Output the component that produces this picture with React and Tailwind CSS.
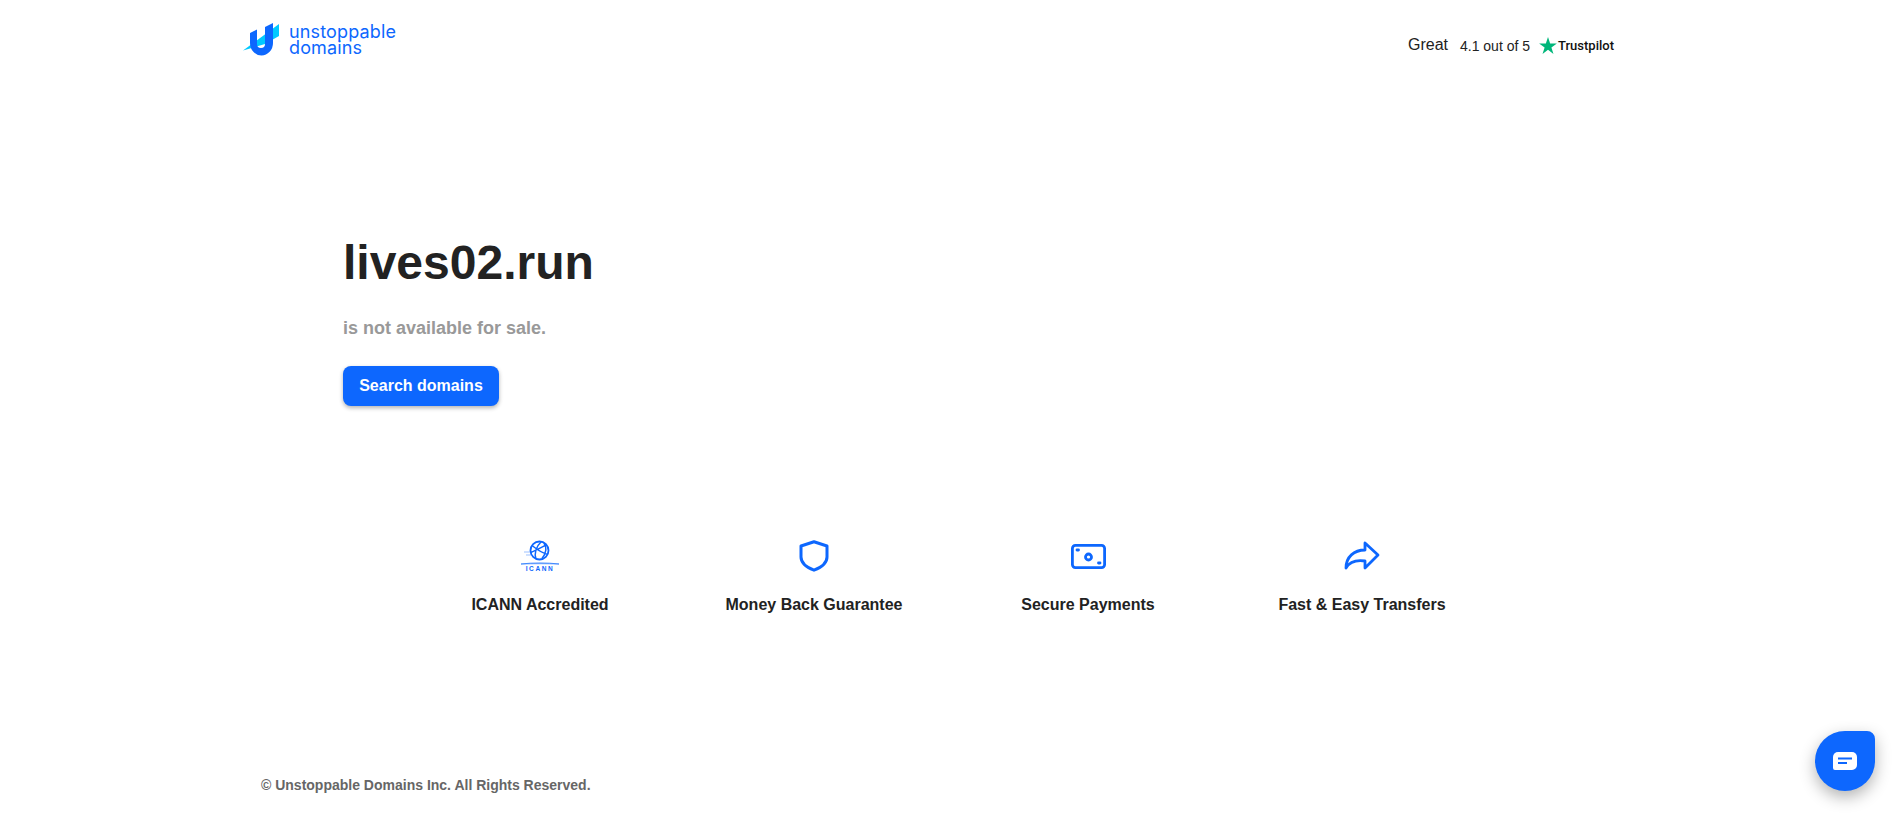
import React from "react";

const BLUE = "#0d67fe";

function Logo() {
  return (
    <div className="flex flex-row items-center gap-[10px]">
      <svg width="36" height="33" viewBox="0 0 36 33">
        <path d="M0 27.5 L36 1 V13 L22 21 Z" fill="#00c9ff" />
        <path d="M7 10 L14 6.5 V21 a4 4 0 0 0 8 0 V4 L30 0 V20 a11.5 12.5 0 0 1 -23 0 Z" fill={BLUE} />
      </svg>
      <div className="text-[18px] leading-[15.5px] tracking-[0.15px] text-[#0d67fe] font-['Inter',sans-serif] font-normal">
        unstoppable
        <br />
        domains
      </div>
    </div>
  );
}

function Trustpilot() {
  return (
    <div className="flex flex-row items-center text-[#222]">
      <span className="text-[16px] mr-[12px] mb-[2px]">Great</span>
      <span className="text-[14px] mr-[9px]">4.1 out of 5</span>
      <svg width="18" height="17" viewBox="0 0 24 23" className="mb-[2px]">
        <path d="M12 0 L14.9 8.7 H24 L16.6 14.1 L19.4 22.9 L12 17.4 L4.6 22.9 L7.4 14.1 L0 8.7 H9.1 Z" fill="#00b67a" />
      </svg>
      <span className="ml-[1px] text-[13px] font-medium text-[#111] font-['Roboto',sans-serif]">Trustpilot</span>
    </div>
  );
}

function Feature({ label, children }) {
  return (
    <div className="w-[274px] flex flex-col items-center">
      <div className="h-[40px] flex items-center justify-center">{children}</div>
      <div className="mt-[17px] text-[16px] font-bold leading-[24px] text-[#222]">{label}</div>
    </div>
  );
}

function IcannIcon() {
  return (
    <svg width="38" height="32" viewBox="0 0 38 32" fill="none" stroke={BLUE}>
      <circle cx="18.5" cy="10.5" r="9" strokeWidth="1.8" />
      <path d="M11 5.5 C16 9.5 22 13.5 27 14.5 M9.5 12.5 C15 10.5 22 6.5 26 4.5 M20 2 C15 6.5 13 13.5 15 19 M23 3 C26 7.5 25 13.5 21 18.5" strokeWidth="1.5" />
      <path d="M3 12 H9 M5 15 H10" strokeWidth="0.8" opacity="0.5" />
      <path d="M0 24 C12 22.5 26 22.5 38 24 C26 23.6 12 23.6 0 24 Z" strokeWidth="0.9" opacity="0.7" />
      <text x="19" y="31" textAnchor="middle" fontSize="6.5" fontFamily="'Liberation Sans', sans-serif" fontWeight="700" letterSpacing="1.6" fill={BLUE} stroke="none">ICANN</text>
    </svg>
  );
}

function ShieldIcon() {
  return (
    <svg width="30" height="32" viewBox="0 0 30 32" fill="none" stroke={BLUE} strokeWidth="3" strokeLinejoin="round">
      <path d="M15 1.8 L28 6 V17 C28 23 22 27.5 15 30.2 C8 27.5 2 23 2 17 V6 Z" />
    </svg>
  );
}

function MoneyIcon() {
  return (
    <svg width="35" height="25" viewBox="0 0 35 25" fill="none" stroke={BLUE} strokeWidth="2.8">
      <rect x="1.4" y="1.4" width="32.2" height="22.2" rx="3" />
      <circle cx="17.5" cy="13" r="3" />
      <path d="M6 6 H7.5 M27.5 19 H29" strokeLinecap="round" />
    </svg>
  );
}

function ArrowIcon() {
  return (
    <svg width="36" height="30" viewBox="0 0 36 30" fill="none" stroke={BLUE} strokeWidth="2.8" strokeLinejoin="round" strokeLinecap="round">
      <path d="M21 2 L34 14 L21 27 V20 C14 19 6 20 2 27 C2 16 10 9 21 9 Z" />
    </svg>
  );
}

export default function App() {
  return (
    <div className="relative w-full h-[818px] bg-white overflow-hidden font-['Liberation_Sans',Arial,sans-serif]">
      <div className="h-[80px] pt-[23px] pl-[243px] pr-[288px] flex flex-row justify-between items-start">
        <Logo />
        <div className="pt-[10px]">
          <Trustpilot />
        </div>
      </div>

      <div className="pl-[343px] pt-[147px]">
        <h1 className="text-[48px] leading-[72px] font-bold text-[#222]">lives02.run</h1>
        <p className="mt-[17px] text-[18px] leading-[24px] font-bold text-[#999]">is not available for sale.</p>
        <button className="mt-[26px] w-[156px] h-[40px] rounded-lg bg-[#0d67fe] text-white text-[16px] font-bold shadow-[0_2px_4px_rgba(0,0,0,0.3)]">
          Search domains
        </button>
      </div>

      <div className="mt-[130px] pl-[403px] flex flex-row">
        <Feature label="ICANN Accredited"><IcannIcon /></Feature>
        <Feature label="Money Back Guarantee"><ShieldIcon /></Feature>
        <Feature label="Secure Payments"><MoneyIcon /></Feature>
        <Feature label="Fast & Easy Transfers"><ArrowIcon /></Feature>
      </div>

      <div className="mt-[158px] pl-[261px] text-[14px] leading-[20px] font-bold text-[#666]">
        © Unstoppable Domains Inc. All Rights Reserved.
      </div>

      <button className="absolute left-[1815px] top-[731px] w-[60px] h-[60px] rounded-[30px_8px_30px_30px] bg-[#0d67fe] flex items-center justify-center shadow-[0_6px_16px_rgba(0,0,0,0.3)]">
        <svg width="24" height="18" viewBox="0 0 24 18">
          <path d="M5 0 H19 a5 5 0 0 1 5 5 V13 a5 5 0 0 1 -5 5 H2 a2 2 0 0 1 -2 -2 V5 a5 5 0 0 1 5 -5 Z" fill="#fff" />
          <path d="M5 6.5 H19 M5 11 H14" stroke={BLUE} strokeWidth="2" />
        </svg>
      </button>
    </div>
  );
}
